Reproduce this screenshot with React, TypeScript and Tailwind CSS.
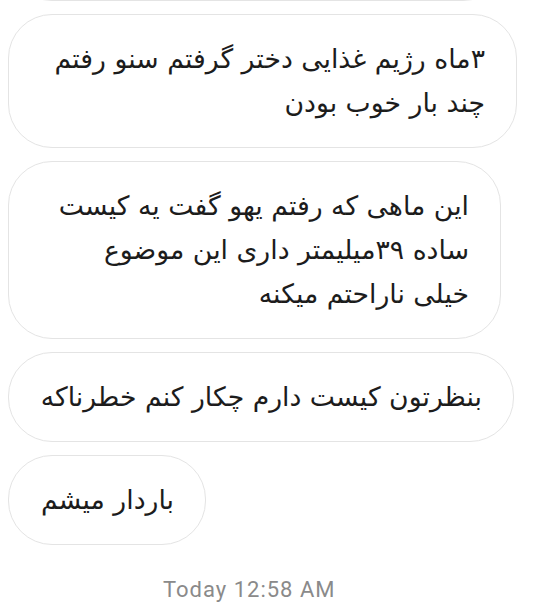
const messages = [
  {
    width: "w-[509px]",
    lines: ["۳ماه رژیم غذایی دختر گرفتم سنو رفتم", "چند بار خوب بودن"],
  },
  {
    width: "w-[493px]",
    lines: [
      "این ماهی که رفتم یهو گفت یه کیست",
      "ساده ۳۹میلیمتر داری این موضوع",
      "خیلی ناراحتم میکنه",
    ],
  },
  {
    width: "w-[506px]",
    lines: ["بنظرتون کیست دارم چکار کنم خطرناکه"],
  },
  {
    width: "w-[198px]",
    lines: ["باردار میشم"],
  },
];

export default function App() {
  return (
    <main className="w-[548px] h-[608px] overflow-hidden bg-white">
      <div className="flex flex-col items-start gap-[13px] pl-2">
        {/* previous bubble, only its bottom edge is on screen */}
        <div className="w-[499px] h-[90px] -mt-[89px] rounded-[44px] border border-[#e4e4e4]" />
        {messages.map((m, i) => (
          <div
            key={i}
            dir="rtl"
            className={`${m.width} rounded-[44px] border border-[#e4e4e4] bg-white py-[22px] pr-[31px] pl-3 text-right text-[#1c1c1c] text-[26.7px] leading-[44px] font-['DejaVu_Sans',sans-serif]`}
          >
            {m.lines.map((line, j) => (
              <div key={j} className="whitespace-nowrap">
                {line}
              </div>
            ))}
          </div>
        ))}
      </div>
      <div className="mt-[31px] pl-[163px] text-[22px] leading-[28px] tracking-[1px] text-[#8a8a8a] font-['Roboto',sans-serif]">
        Today 12:58 AM
      </div>
    </main>
  );
}
